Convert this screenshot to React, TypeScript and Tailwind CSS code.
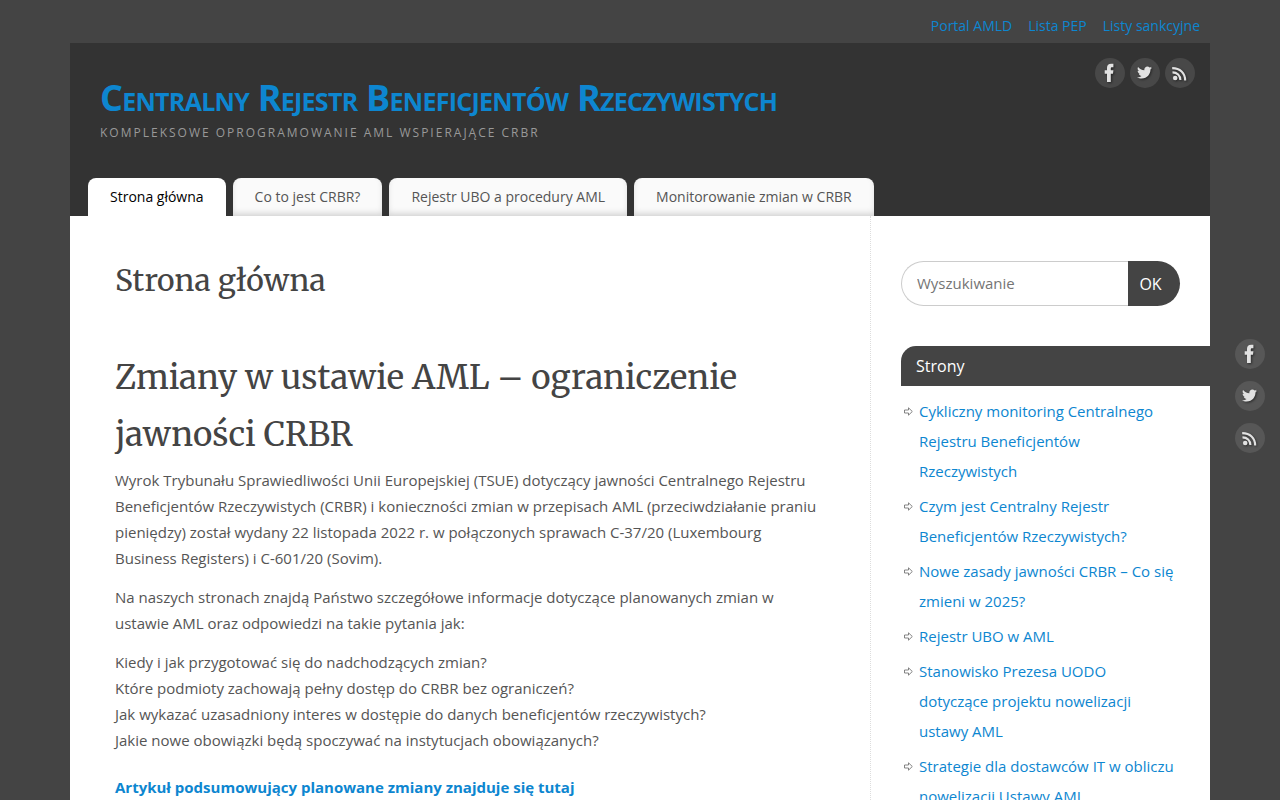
import { FaTwitter } from "react-icons/fa"

const topLinks = ["Portal AMLD", "Lista PEP", "Listy sankcyjne"]

const tabs = [
  "Strona główna",
  "Co to jest CRBR?",
  "Rejestr UBO a procedury AML",
  "Monitorowanie zmian w CRBR",
]

const pages = [
  "Cykliczny monitoring Centralnego Rejestru Beneficjentów Rzeczywistych",
  "Czym jest Centralny Rejestr Beneficjentów Rzeczywistych?",
  "Nowe zasady jawności CRBR – Co się zmieni w 2025?",
  "Rejestr UBO w AML",
  "Stanowisko Prezesa UODO dotyczące projektu nowelizacji ustawy AML",
  "Strategie dla dostawców IT w obliczu nowelizacji Ustawy AML",
]

function FacebookIcon() {
  return (
    <svg viewBox="0 0 30 30" className="size-full drop-shadow-[1px_1px_1px_rgba(0,0,0,0.5)]" fill="#e2e2e2">
      <path d="M12 24v-8.3H9.7v-3.4H12V10c0-2.8 1.6-4.2 4.1-4.2h2.3v3.4h-1.3c-1 0-1.3.5-1.3 1.4v1.7h2.6l-.4 3.4h-2.2V24z" />
    </svg>
  )
}

function TwitterIcon() {
  return (
    <svg viewBox="0 0 30 30" className="size-full text-[#e2e2e2] drop-shadow-[1px_1px_1px_rgba(0,0,0,0.5)]">
      <FaTwitter x={7} y={7} width={16} height={16} />
    </svg>
  )
}

function RssIcon() {
  return (
    <svg
      viewBox="0 0 30 30"
      className="size-full drop-shadow-[1px_1px_1px_rgba(0,0,0,0.5)]"
      fill="none"
      stroke="#e2e2e2"
      strokeWidth="2.1"
    >
      <circle cx="10.2" cy="20" r="2.3" fill="#e2e2e2" stroke="none" />
      <path d="M7.5 14.4c4.5 0 7.9 3.2 7.9 7.7" />
      <path d="M7.2 10.1c7.9 0 12.9 4.8 13 12.4" />
    </svg>
  )
}

const socials = [
  { label: "Facebook", Icon: FacebookIcon },
  { label: "Twitter", Icon: TwitterIcon },
  { label: "RSS", Icon: RssIcon },
]

function Arrow() {
  return (
    <svg viewBox="0 0 9 9" className="mt-[11px] size-[9px] shrink-0" fill="none" stroke="#666" strokeWidth="0.8">
      <path d="M0.5 3h4V0.8L8.3 4.5 4.5 8.2V6h-4z" />
    </svg>
  )
}

function Header() {
  return (
    <header className="bg-[#333]">
      <div className="flex justify-between pt-[15px] pr-[15px] pl-[30px]">
        <div className="pt-[15px]">
          <h1 className="text-[36px] leading-[50px] font-bold tracking-[-0.02em] [font-variant:small-caps]">
            <a href="#" className="text-[#0d86d0]">
              Centralny Rejestr Beneficjentów Rzeczywistych
            </a>
          </h1>
          <p className="text-[12px] leading-[20px] tracking-[2px] text-[#999] uppercase">
            Kompleksowe oprogramowanie AML wspierające CRBR
          </p>
        </div>
        <div className="flex gap-[5px]">
          {socials.map(({ label, Icon }) => (
            <a key={label} href="#" aria-label={label} className="size-[30px] rounded-full bg-[#484848]">
              <Icon />
            </a>
          ))}
        </div>
      </div>
      <nav className="flex gap-[7px] px-[18px] pt-[35px] text-[14px] leading-[38px]">
        {tabs.map((tab, i) => (
          <a
            key={tab}
            href="#"
            className={
              i === 0
                ? "rounded-t-[8px] bg-white px-[22px] text-black"
                : "rounded-t-[8px] bg-[#fafafa] px-[22px] text-[#555] shadow-[inset_0_-4px_7px_-2px_rgba(0,0,0,0.18)]"
            }
          >
            {tab}
          </a>
        ))}
      </nav>
    </header>
  )
}

function Article() {
  return (
    <main className="min-w-0 flex-1 px-[45px] pt-[36px] pb-10">
      <h1 className="font-[Merriweather,'Liberation_Serif',serif] text-[30px] leading-[57px] text-[#444]">
        Strona główna
      </h1>
      <h2 className="mt-[40px] font-[Merriweather,'Liberation_Serif',serif] text-[33px] leading-[57px] text-[#444]">
        Zmiany w ustawie AML – ograniczenie jawności CRBR
      </h2>
      <div className="mt-[4px] flex flex-col gap-[13px] leading-[26px]">
        <p>
          Wyrok Trybunału Sprawiedliwości Unii Europejskiej (TSUE) dotyczący jawności Centralnego Rejestru
          Beneficjentów Rzeczywistych (CRBR) i konieczności zmian w przepisach AML (przeciwdziałanie praniu pieniędzy)
          został wydany 22 listopada 2022 r. w połączonych sprawach C-37/20 (Luxembourg Business Registers) i C-601/20
          (Sovim).
        </p>
        <p>
          Na naszych stronach znajdą Państwo szczegółowe informacje dotyczące planowanych zmian w ustawie AML oraz
          odpowiedzi na takie pytania jak:
        </p>
        <p>
          Kiedy i jak przygotować się do nadchodzących zmian?
          <br />
          Które podmioty zachowają pełny dostęp do CRBR bez ograniczeń?
          <br />
          Jak wykazać uzasadniony interes w dostępie do danych beneficjentów rzeczywistych?
          <br />
          Jakie nowe obowiązki będą spoczywać na instytucjach obowiązanych?
        </p>
        <p className="mt-2">
          <a href="#" className="font-bold text-[#0d86d0]">
            Artykuł podsumowujący planowane zmiany znajduje się tutaj
          </a>
        </p>
      </div>
    </main>
  )
}

function Sidebar() {
  return (
    <aside className="w-[340px] shrink-0 border-l border-dotted border-[#ddd] pt-[45px] pl-[30px]">
      <form className="mr-[30px] flex h-[45px]">
        <input
          type="search"
          aria-label="Wyszukiwanie"
          placeholder="Wyszukiwanie"
          className="min-w-0 flex-1 rounded-l-full border border-r-0 border-[#ccc] px-[15px] placeholder:text-[#757575]"
        />
        <button type="button" className="w-[52px] rounded-r-full bg-[#444] pr-[7px] text-[16px] text-white">
          OK
        </button>
      </form>
      <h3 className="mt-10 rounded-tl-[15px] bg-[#444] pl-[15px] text-[16px] leading-[40px] text-white">Strony</h3>
      <ul className="mt-[10px] mr-[35px] flex flex-col gap-[5px] leading-[30px]">
        {pages.map((page) => (
          <li key={page} className="flex gap-[6px] pl-[3px]">
            <Arrow />
            <a href="#" className="text-[#0d86d0]">
              {page}
            </a>
          </li>
        ))}
      </ul>
    </aside>
  )
}

function App() {
  return (
    <div className="min-h-screen bg-[#444] font-['Open_Sans',sans-serif] text-[15px] text-[#555]">
      <div className="mx-auto max-w-[1140px]">
        <nav className="flex justify-end gap-4 pt-[16px] pr-[10px] pb-[7px] text-[14px] leading-[20px]">
          {topLinks.map((link) => (
            <a key={link} href="#" className="text-[#0d86d0]">
              {link}
            </a>
          ))}
        </nav>
        <Header />
        <div className="flex bg-white">
          <Article />
          <Sidebar />
        </div>
      </div>
      <div className="fixed top-[339px] right-[15px] flex flex-col gap-[12px]">
        {socials.map(({ label, Icon }) => (
          <a key={label} href="#" aria-label={label} className="size-[30px] rounded-full bg-[#575757]">
            <Icon />
          </a>
        ))}
      </div>
    </div>
  )
}

export default App
